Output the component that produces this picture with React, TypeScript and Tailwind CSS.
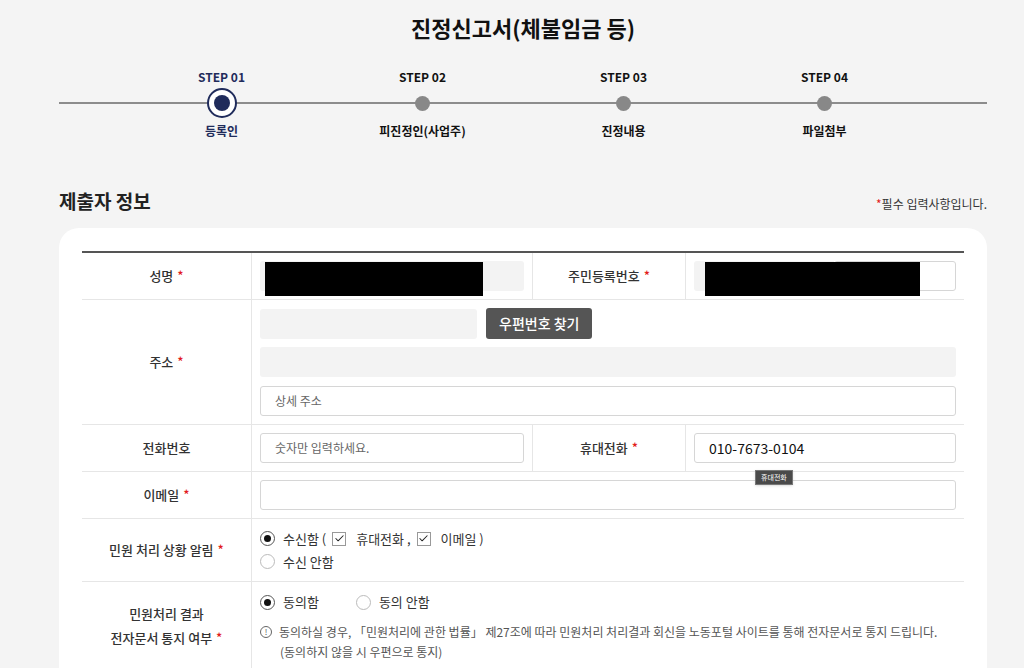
import { Check } from 'lucide-react'

const steps = [
  { no: 'STEP 01', name: '등록인', active: true },
  { no: 'STEP 02', name: '피진정인(사업주)', active: false },
  { no: 'STEP 03', name: '진정내용', active: false },
  { no: 'STEP 04', name: '파일첨부', active: false },
]

function Req() {
  return <span className="ml-1 text-[#e21c1c]">*</span>
}

function Label({ children, req, border = false }: { children: React.ReactNode; req?: boolean; border?: boolean }) {
  return (
    <div
      className={`flex items-center justify-center text-center text-[13px] font-medium leading-[24px] text-[#333] ${
        border ? 'border-x border-[#e6e6e6]' : 'border-r border-[#e6e6e6]'
      }`}
    >
      <div>
        {children}
        {req && <Req />}
      </div>
    </div>
  )
}

function Radio({ checked }: { checked?: boolean }) {
  return (
    <span
      className={`inline-flex h-[15px] w-[15px] shrink-0 items-center justify-center rounded-full border bg-white ${
        checked ? 'border-[#555]' : 'border-[#bbb]'
      }`}
    >
      {checked && <span className="h-[7px] w-[7px] rounded-full bg-[#111]" />}
    </span>
  )
}

function CheckBox() {
  return (
    <span className="mr-[4px] inline-flex h-[14px] w-[14px] items-center justify-center border border-[#999] bg-white">
      <Check className="h-[11px] w-[11px] text-[#222]" strokeWidth={2.2} />
    </span>
  )
}

export default function App() {
  return (
    <div className="min-h-[668px] bg-[#f4f4f4] font-['Noto_Sans_CJK_KR','Noto_Sans',sans-serif] text-[#222]">
      <div className="ml-[59px] w-[928px] pt-[12px]">
        {/* Title */}
        <h1 className="text-center text-[22px] font-bold leading-[30px] text-[#111]">진정신고서(체불임금 등)</h1>

        {/* Steps */}
        <div className="relative mt-[27px]">
          <div className="absolute left-0 right-0 top-[33px] h-[2px] bg-[#8c8c8c]" />
          <div className="relative mx-auto grid w-[804px] grid-cols-4">
            {steps.map((s) => (
              <div key={s.no} className="flex flex-col items-center">
                <div className={`text-[12px] font-bold leading-[16px] ${s.active ? 'text-[#1f2b5b]' : 'text-[#111]'}`}>
                  {s.no}
                </div>
                <div className="mt-[3px] flex h-[30px] items-center justify-center">
                  {s.active ? (
                    <span className="flex h-[30px] w-[30px] items-center justify-center rounded-full border-2 border-[#1f2b5b] bg-white">
                      <span className="h-[16px] w-[16px] rounded-full bg-[#1f2b5b]" />
                    </span>
                  ) : (
                    <span className="h-[15px] w-[15px] rounded-full bg-[#888]" />
                  )}
                </div>
                <div className={`mt-[5px] text-[12px] font-bold leading-[16px] ${s.active ? 'text-[#1f2b5b]' : 'text-[#111]'}`}>
                  {s.name}
                </div>
              </div>
            ))}
          </div>
        </div>

        {/* Section header */}
        <div className="mt-[48px] flex items-end justify-between">
          <h2 className="text-[19px] font-bold leading-[28px] text-[#222]">제출자 정보</h2>
          <p className="pb-[1px] text-[12px] leading-[20px] text-[#333]">
            <span className="text-[#e21c1c]">*</span>필수 입력사항입니다.
          </p>
        </div>

        {/* Card */}
        <div className="mt-[13px] rounded-t-[20px] bg-white px-[23px] pt-[23px] pb-6">
          <div className="grid grid-cols-[170px_280px_154px_1fr] border-t-2 border-[#555] text-[13px]">
            {/* 성명 / 주민등록번호 */}
            <Label req>성명</Label>
            <div className="relative px-2 py-2">
              <div className="h-[30px] rounded-[3px] bg-[#f3f3f3]" />
              <div className="absolute left-[13px] top-[9px] h-[34px] w-[218px] bg-black" />
            </div>
            <Label req border>
              주민등록번호
            </Label>
            <div className="relative px-2 py-2">
              <div className="flex h-[30px]">
                <div className="w-[140px] rounded-l-[3px] bg-[#f3f3f3]" />
                <div className="flex-1 rounded-[3px] border border-[#d6d6d6] bg-white" />
              </div>
              <div className="absolute left-[19px] top-[9px] h-[34px] w-[215px] bg-black" />
            </div>
            <div className="col-span-4 h-px bg-[#e6e6e6]" />

            {/* 주소 */}
            <Label req>주소</Label>
            <div className="col-span-3 flex flex-col gap-2 px-2 py-2">
              <div className="flex items-center gap-[9px]">
                <div className="h-[30px] w-[217px] rounded-[3px] bg-[#f3f3f3]" />
                <button className="h-[31px] rounded-[3px] bg-[#555] px-[13px] text-[14px] font-medium text-white">
                  우편번호 찾기
                </button>
              </div>
              <div className="h-[30px] rounded-[3px] bg-[#f3f3f3]" />
              <div className="mt-px flex h-[30px] items-center rounded-[3px] border border-[#d6d6d6] px-[14px] text-[12px] text-[#666]">
                상세 주소
              </div>
            </div>
            <div className="col-span-4 h-px bg-[#e6e6e6]" />

            {/* 전화번호 / 휴대전화 */}
            <Label>전화번호</Label>
            <div className="px-2 py-2">
              <div className="flex h-[30px] items-center rounded-[3px] border border-[#d6d6d6] px-[14px] text-[12px] text-[#666]">
                숫자만 입력하세요.
              </div>
            </div>
            <Label req border>
              휴대전화
            </Label>
            <div className="relative px-2 py-2">
              <div className="flex h-[30px] items-center rounded-[3px] border border-[#d6d6d6] px-[14px] text-[14px] text-[#111]">
                010-7673-0104
              </div>
              <div className="absolute left-[69px] top-[45px] z-10 border border-[#777] bg-[#4a4a4a] px-[5px] text-[7px] leading-[13px] text-white shadow">
                휴대전화
              </div>
            </div>
            <div className="col-span-4 h-px bg-[#e6e6e6]" />

            {/* 이메일 */}
            <Label req>이메일</Label>
            <div className="col-span-3 px-2 py-2">
              <div className="h-[30px] rounded-[3px] border border-[#d6d6d6]" />
            </div>
            <div className="col-span-4 h-px bg-[#e6e6e6]" />

            {/* 민원 처리 상황 알림 */}
            <Label req>민원 처리 상황 알림</Label>
            <div className="col-span-3 px-2 py-2 text-[13px] leading-[23px] text-[#333]">
              <div className="flex items-center gap-[8px]">
                <Radio checked />
                <span className="flex items-center gap-[6px]">
                  수신함 ( <CheckBox /> 휴대전화 , <CheckBox /> 이메일 )
                </span>
              </div>
              <div className="flex items-center gap-[8px]">
                <Radio />
                <span>수신 안함</span>
              </div>
            </div>
            <div className="col-span-4 h-px bg-[#e6e6e6]" />

            {/* 민원처리 결과 전자문서 통지 여부 */}
            <Label req>
              민원처리 결과
              <br />
              전자문서 통지 여부
            </Label>
            <div className="col-span-3 px-2 py-2 text-[#333]">
              <div className="flex items-center text-[13px] leading-[24px]">
                <Radio checked />
                <span className="ml-[8px]">동의함</span>
                <span className="ml-[37px] flex items-center">
                  <Radio />
                </span>
                <span className="ml-[8px]">동의 안함</span>
              </div>
              <div className="mt-2 text-[12px] leading-[20px] text-[#555]">
                <div className="flex items-center">
                  <span className="mr-[7px] inline-flex h-[12px] w-[12px] items-center justify-center rounded-full border border-[#666] text-[8px] leading-none">
                    !
                  </span>
                  동의하실 경우, 「민원처리에 관한 법률」 제27조에 따라 민원처리 처리결과 회신을 노동포털 사이트를 통해 전자문서로 통지 드립니다.
                </div>
                <div className="pl-[20px]">(동의하지 않을 시 우편으로 통지)</div>
              </div>
            </div>
          </div>
        </div>
      </div>
    </div>
  )
}
